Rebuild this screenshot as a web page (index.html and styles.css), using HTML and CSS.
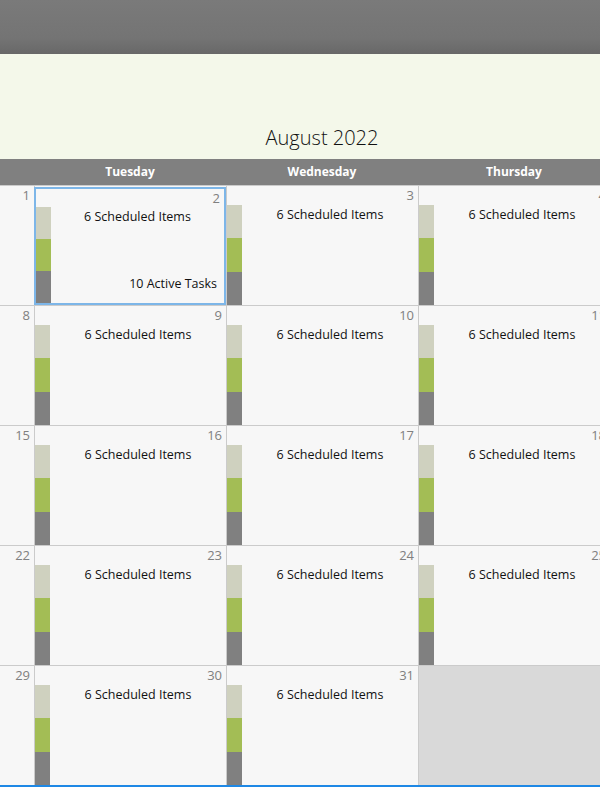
FILE: index.html
```html
<!DOCTYPE html>
<html lang="en">
  <head>
    <meta charset="UTF-8" />
    <meta name="viewport" content="width=device-width, initial-scale=1.0" />
    <title>Calendar</title>
    <link rel="stylesheet" href="styles.css">
  </head>
  <body>
    <div id="top-bar"></div>

    <div id="calendar">
      <div id="month-title">August 2022</div>

      <div id="week-head">
        <div>Sunday</div>
        <div>Monday</div>
        <div>Tuesday</div>
        <div>Wednesday</div>
        <div>Thursday</div>
        <div>Friday</div>
        <div>Saturday</div>
      </div>

      <div id="month-grid">
        <!-- week 1 -->
        <div class="day other"></div>
        <div class="day"><div class="day-box"><span class="day-num">1</span><div class="day-body"><div class="load-bar"><i></i><i></i><i></i></div><div class="day-info"><p class="sched">6 Scheduled Items</p></div></div></div></div>
        <div class="day selected"><div class="day-box"><span class="day-num">2</span><div class="day-body"><div class="load-bar"><i></i><i></i><i></i></div><div class="day-info"><p class="sched">6 Scheduled Items</p><p class="tasks">10 Active Tasks</p></div></div></div></div>
        <div class="day"><div class="day-box"><span class="day-num">3</span><div class="day-body"><div class="load-bar"><i></i><i></i><i></i></div><div class="day-info"><p class="sched">6 Scheduled Items</p></div></div></div></div>
        <div class="day"><div class="day-box"><span class="day-num">4</span><div class="day-body"><div class="load-bar"><i></i><i></i><i></i></div><div class="day-info"><p class="sched">6 Scheduled Items</p></div></div></div></div>
        <div class="day"><div class="day-box"><span class="day-num">5</span><div class="day-body"><div class="load-bar"><i></i><i></i><i></i></div><div class="day-info"><p class="sched">6 Scheduled Items</p></div></div></div></div>
        <div class="day"><div class="day-box"><span class="day-num">6</span></div></div>

        <!-- week 2 -->
        <div class="day"><div class="day-box"><span class="day-num">7</span></div></div>
        <div class="day"><div class="day-box"><span class="day-num">8</span><div class="day-body"><div class="load-bar"><i></i><i></i><i></i></div><div class="day-info"><p class="sched">6 Scheduled Items</p></div></div></div></div>
        <div class="day"><div class="day-box"><span class="day-num">9</span><div class="day-body"><div class="load-bar"><i></i><i></i><i></i></div><div class="day-info"><p class="sched">6 Scheduled Items</p></div></div></div></div>
        <div class="day"><div class="day-box"><span class="day-num">10</span><div class="day-body"><div class="load-bar"><i></i><i></i><i></i></div><div class="day-info"><p class="sched">6 Scheduled Items</p></div></div></div></div>
        <div class="day"><div class="day-box"><span class="day-num">11</span><div class="day-body"><div class="load-bar"><i></i><i></i><i></i></div><div class="day-info"><p class="sched">6 Scheduled Items</p></div></div></div></div>
        <div class="day"><div class="day-box"><span class="day-num">12</span><div class="day-body"><div class="load-bar"><i></i><i></i><i></i></div><div class="day-info"><p class="sched">6 Scheduled Items</p></div></div></div></div>
        <div class="day"><div class="day-box"><span class="day-num">13</span></div></div>

        <!-- week 3 -->
        <div class="day"><div class="day-box"><span class="day-num">14</span></div></div>
        <div class="day"><div class="day-box"><span class="day-num">15</span><div class="day-body"><div class="load-bar"><i></i><i></i><i></i></div><div class="day-info"><p class="sched">6 Scheduled Items</p></div></div></div></div>
        <div class="day"><div class="day-box"><span class="day-num">16</span><div class="day-body"><div class="load-bar"><i></i><i></i><i></i></div><div class="day-info"><p class="sched">6 Scheduled Items</p></div></div></div></div>
        <div class="day"><div class="day-box"><span class="day-num">17</span><div class="day-body"><div class="load-bar"><i></i><i></i><i></i></div><div class="day-info"><p class="sched">6 Scheduled Items</p></div></div></div></div>
        <div class="day"><div class="day-box"><span class="day-num">18</span><div class="day-body"><div class="load-bar"><i></i><i></i><i></i></div><div class="day-info"><p class="sched">6 Scheduled Items</p></div></div></div></div>
        <div class="day"><div class="day-box"><span class="day-num">19</span><div class="day-body"><div class="load-bar"><i></i><i></i><i></i></div><div class="day-info"><p class="sched">6 Scheduled Items</p></div></div></div></div>
        <div class="day"><div class="day-box"><span class="day-num">20</span></div></div>

        <!-- week 4 -->
        <div class="day"><div class="day-box"><span class="day-num">21</span></div></div>
        <div class="day"><div class="day-box"><span class="day-num">22</span><div class="day-body"><div class="load-bar"><i></i><i></i><i></i></div><div class="day-info"><p class="sched">6 Scheduled Items</p></div></div></div></div>
        <div class="day"><div class="day-box"><span class="day-num">23</span><div class="day-body"><div class="load-bar"><i></i><i></i><i></i></div><div class="day-info"><p class="sched">6 Scheduled Items</p></div></div></div></div>
        <div class="day"><div class="day-box"><span class="day-num">24</span><div class="day-body"><div class="load-bar"><i></i><i></i><i></i></div><div class="day-info"><p class="sched">6 Scheduled Items</p></div></div></div></div>
        <div class="day"><div class="day-box"><span class="day-num">25</span><div class="day-body"><div class="load-bar"><i></i><i></i><i></i></div><div class="day-info"><p class="sched">6 Scheduled Items</p></div></div></div></div>
        <div class="day"><div class="day-box"><span class="day-num">26</span><div class="day-body"><div class="load-bar"><i></i><i></i><i></i></div><div class="day-info"><p class="sched">6 Scheduled Items</p></div></div></div></div>
        <div class="day"><div class="day-box"><span class="day-num">27</span></div></div>

        <!-- week 5 -->
        <div class="day"><div class="day-box"><span class="day-num">28</span></div></div>
        <div class="day"><div class="day-box"><span class="day-num">29</span><div class="day-body"><div class="load-bar"><i></i><i></i><i></i></div><div class="day-info"><p class="sched">6 Scheduled Items</p></div></div></div></div>
        <div class="day"><div class="day-box"><span class="day-num">30</span><div class="day-body"><div class="load-bar"><i></i><i></i><i></i></div><div class="day-info"><p class="sched">6 Scheduled Items</p></div></div></div></div>
        <div class="day"><div class="day-box"><span class="day-num">31</span><div class="day-body"><div class="load-bar"><i></i><i></i><i></i></div><div class="day-info"><p class="sched">6 Scheduled Items</p></div></div></div></div>
        <div class="day other"></div>
        <div class="day other"></div>
        <div class="day other"></div>
      </div>
    </div>
  </body>
</html>
```

FILE: styles.css
```css
body {
  margin: 0;
  overflow: hidden;
  background: #f7f7f7;
  font-family: "Open Sans", "Noto Sans", sans-serif;
}

#top-bar {
  height: 54px;
  background: linear-gradient(#7a7a7a, #747474 70%, #686868);
}

/* calendar is wider than the window, scrolled so Tuesday sits near the left */
#calendar {
  width: 1344px;
  margin-left: -350px;
}

#month-title {
  height: 105px;
  box-sizing: border-box;
  display: flex;
  align-items: flex-end;
  justify-content: center;
  padding-bottom: 8px;
  background: #f4f8ea;
  color: #111;
  font-size: 20px;
  font-weight: 300;
  line-height: 27px;
}

#week-head {
  display: grid;
  grid-template-columns: repeat(7, 192px);
  height: 26px;
  background: #808080;
}

#week-head > div {
  text-align: center;
  line-height: 26px;
  color: #fff;
  font-size: 12px;
  font-weight: bold;
}

#month-grid {
  display: grid;
  grid-template-columns: repeat(7, 192px);
  grid-template-rows: repeat(5, 120px);
  border-bottom: 2px solid #1e88e5;
}

.day {
  box-sizing: border-box;
  border-top: 1px solid #cbcbcb;
  border-left: 1px solid #cbcbcb;
  background: #f7f7f7;
}

.day.other {
  background: #d9d9d9;
}

.day-box {
  height: 100%;
  box-sizing: border-box;
  display: flex;
  flex-direction: column;
}

.day.selected .day-box {
  border: 2px solid #7db6e8;
  margin: 1px 0 0 -1px;
  height: calc(100% - 1px);
}

.day-num {
  height: 19px;
  box-sizing: border-box;
  padding: 1px 4px 0 0;
  text-align: right;
  font-size: 13px;
  line-height: 17px;
  color: #808080;
}

.day.selected .day-num {
  height: 18px;
}

.day-body {
  flex: 1;
  display: flex;
}

.load-bar {
  width: 15px;
  display: flex;
  flex-direction: column;
}

.load-bar > i {
  flex: 1;
}

.load-bar > i:nth-child(1) {
  background: #cfd1bf;
}

.load-bar > i:nth-child(2) {
  background: #a3bd55;
}

.load-bar > i:nth-child(3) {
  background: #808080;
}

.day-info {
  flex: 1;
  display: flex;
  flex-direction: column;
  justify-content: space-between;
  font-size: 12.5px;
  color: #111;
}

.day-info > p {
  margin: 0;
  line-height: 16px;
}

.sched {
  padding-top: 2px;
  text-align: center;
}

.tasks {
  padding: 0 7px 11px 0;
  text-align: right;
}
```
